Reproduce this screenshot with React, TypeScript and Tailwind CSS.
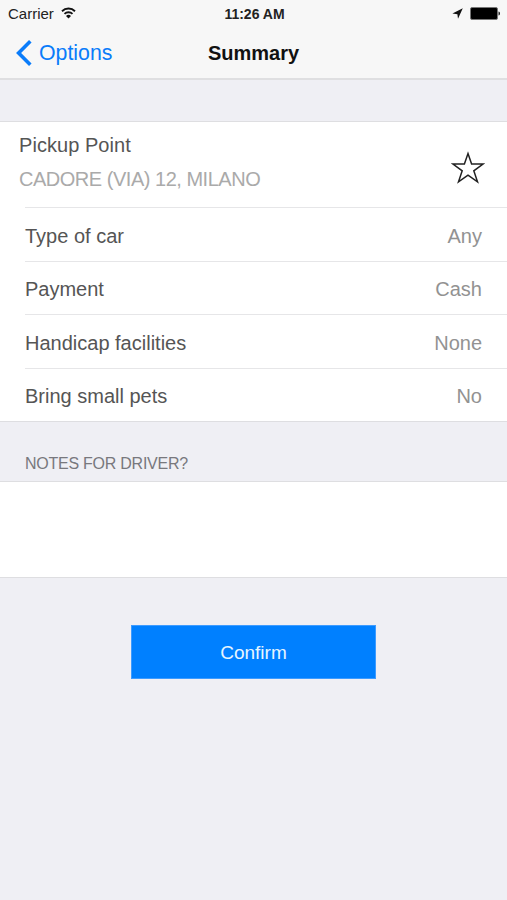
import React, { useState } from "react";

interface RowProps {
  label: string;
  value: string;
}

const rows: RowProps[] = [
  { label: "Type of car", value: "Any" },
  { label: "Payment", value: "Cash" },
  { label: "Handicap facilities", value: "None" },
  { label: "Bring small pets", value: "No" },
];

const StatusBar = () => (
  <div className="grid h-[27px] grid-cols-3 items-center pl-2 pr-[6px] leading-none text-[#222]">
    <div className="flex items-center gap-[7px]">
      <span className="text-[15px]">Carrier</span>
      <svg className="-mt-px" width="15" height="12" viewBox="0 0 15 12" fill="none" stroke="#111" strokeWidth="1.9">
        <path d="M1 4.2a9.3 9.3 0 0 1 13 0" />
        <path d="M3.5 6.9a5.8 5.8 0 0 1 8 0" />
        <path d="M7.5 11.5 5 9a3.6 3.6 0 0 1 5 0Z" fill="#111" stroke="none" />
      </svg>
    </div>
    <span className="text-center text-[14px] font-bold">11:26 AM</span>
    <div className="flex items-center justify-end gap-[7px]">
      <svg width="11" height="11" viewBox="0 0 11 11" fill="#111">
        <path d="M10.8.2 6 10.8 5.4 6.2.4 5.4Z" />
      </svg>
      <svg width="31" height="13" viewBox="0 0 31 13">
        <rect x=".5" y=".5" width="27" height="12" rx="1.5" fill="#000" stroke="#777" />
        <path d="M28.5 4.5c2 .5 2 3.5 0 4Z" fill="#222" />
      </svg>
    </div>
  </div>
);

const Row = ({ label, value }: RowProps) => (
  <div className="ml-[25px] flex flex-1 items-center justify-between border-t border-[#e6e6e8] pr-[25px] pt-[3px]">
    <span className="text-[#555]">{label}</span>
    <span className="text-[#929292]">{value}</span>
  </div>
);

const App = () => {
  const [notes, setNotes] = useState("");

  return (
    <div className="flex h-[900px] w-[507px] flex-col bg-[#efeff4] font-['Liberation_Sans',Arial,sans-serif] text-[20px]">
      <header className="h-20 border-b-2 border-[#dfdfe1] bg-[#f7f7f7]">
        <StatusBar />
        <div className="grid h-[51px] grid-cols-3 items-center">
          <button className="flex items-center gap-[7px] pl-4 text-[21.3px] text-[#0a7cfa]">
            <svg width="16" height="26" viewBox="0 0 16 26" fill="none" stroke="currentColor" strokeWidth="3.6">
              <path d="M14.3 1.3 2.6 13l11.7 11.7" />
            </svg>
            <span className="pt-px leading-[30px]">Options</span>
          </button>
          <h1 className="text-center font-bold text-[#111]">Summary</h1>
        </div>
      </header>

      <section className="mt-[41px] flex h-[301px] flex-col border-y border-[#dedee1] bg-white">
        <div className="flex h-[85px] items-center justify-between pl-[19px] pr-[22px]">
          <div className="flex flex-col gap-1 pb-1.5 leading-[30px]">
            <span className="tracking-[0.05px] text-[#555]">Pickup Point</span>
            <span className="tracking-[-0.48px] text-[#aaa]">CADORE (VIA) 12, MILANO</span>
          </div>
          <svg className="mt-1.5" width="34" height="33" viewBox="0 0 34 33" fill="none" stroke="#222" strokeWidth="1.5">
            <path d="M17 2.5 20.6 13H32l-9.2 6.8 3.7 11L17 24.2l-9.5 6.6 3.7-11L2 13h11.4Z" />
          </svg>
        </div>
        {rows.map((row) => (
          <Row key={row.label} {...row} />
        ))}
      </section>

      <label htmlFor="notes" className="h-[59px] pl-[25px] pt-[30px] text-[16px] leading-6 tracking-[-0.25px] text-[#78787d]">
        NOTES FOR DRIVER?
      </label>
      <textarea
        id="notes"
        className="block h-[97px] w-full resize-none border-y border-[#dedee1] bg-white px-[25px] py-3 outline-none"
        value={notes}
        onChange={(e) => setNotes(e.target.value)}
      />

      <button className="mx-auto mt-[47px] h-[54px] w-[245px] border border-[#3d9bff] bg-[#0080ff] pt-0.5 text-[19px] text-[#e6f5ff]">
        Confirm
      </button>
    </div>
  );
};

export default App;
